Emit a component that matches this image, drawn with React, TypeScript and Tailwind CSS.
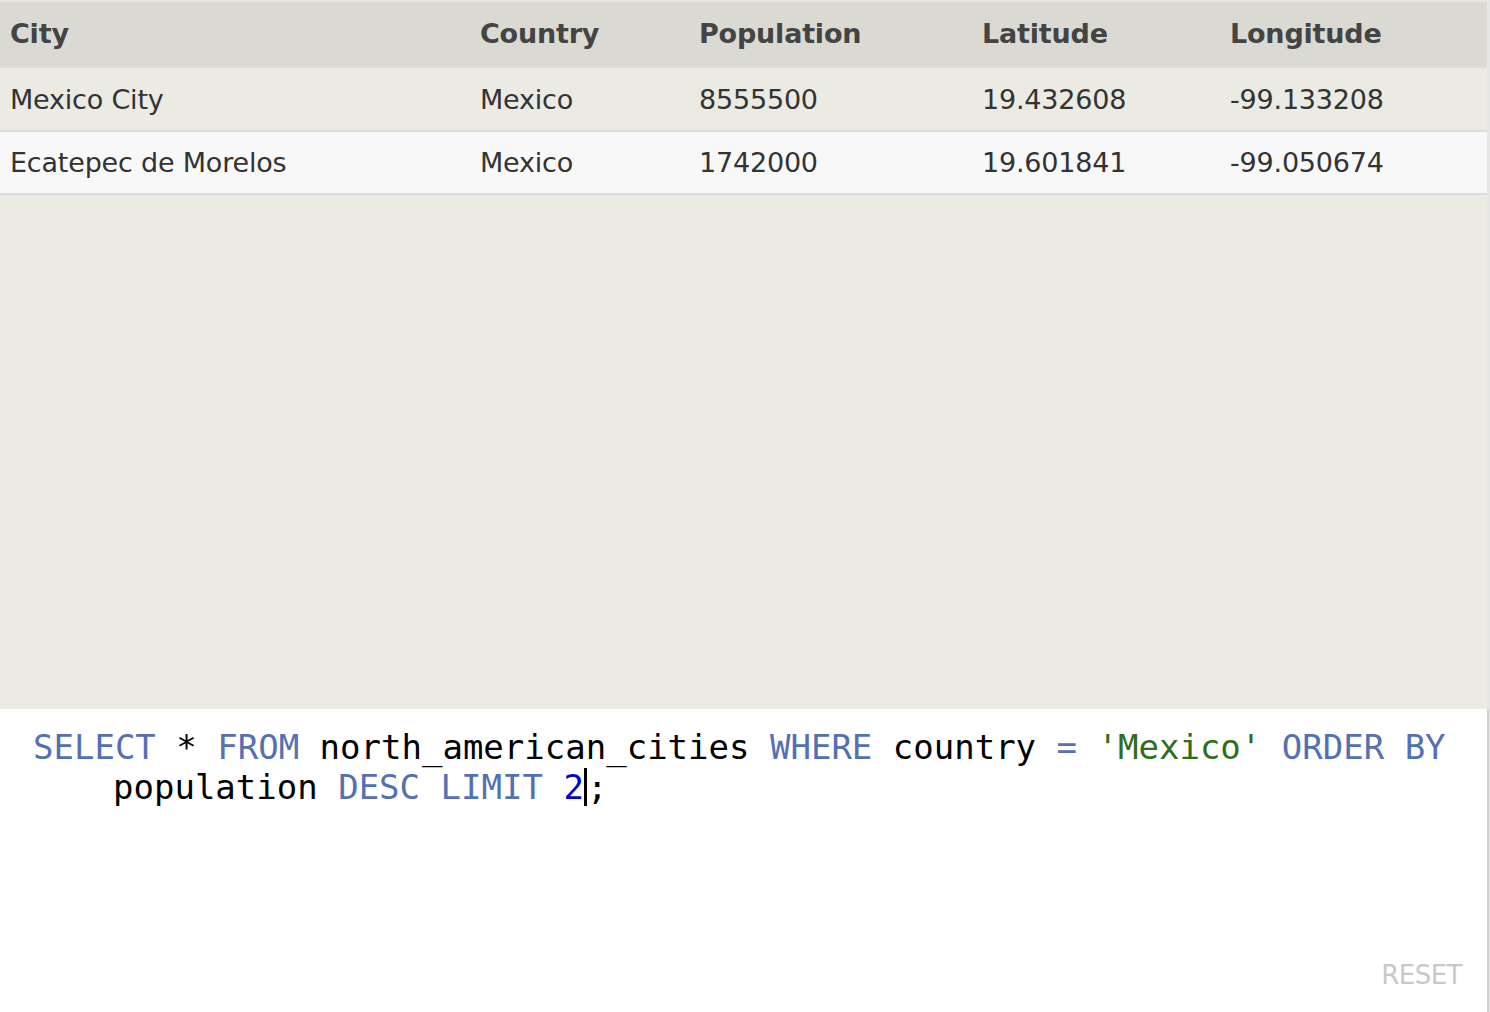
import React from "react";

const rows = [
  ["Mexico City", "Mexico", "8555500", "19.432608", "-99.133208"],
  ["Ecatepec de Morelos", "Mexico", "1742000", "19.601841", "-99.050674"],
];

const cols = ["w-[470px]", "w-[219px]", "w-[283px]", "w-[248px]", "flex-1"];
const heads = ["City", "Country", "Population", "Latitude", "Longitude"];

export default function App() {
  const font = { fontFamily: '"DejaVu Sans", sans-serif' };
  return (
    <div className="w-[1490px] h-[1012px] flex flex-col bg-[#e6e6e6] overflow-hidden" style={font}>
      <div className="h-[707px] flex flex-col bg-[#ebeae3] mt-[2px] mr-[3px]">
        <div className="flex h-[64px] items-center bg-[#dadad2] text-[#444] font-bold text-[27px] pl-[10px] tracking-[-0.2px]">
          {heads.map((h, i) => (
            <div key={h} className={cols[i]}>{h}</div>
          ))}
        </div>
        {rows.map((r, ri) => (
          <div
            key={ri}
            className={
              "flex h-[64px] items-center text-[27px] text-[#333] pl-[10px] pt-[2px] border-t-2 border-[#dcdcd8] tracking-[-0.2px] " +
              (ri === 0 ? "bg-[#ebeae3]" : "bg-[#f8f8f8] h-[65px] border-b-2")
            }
          >
            {r.map((c, i) => (
              <div key={i} className={cols[i]}>{c}</div>
            ))}
          </div>
        ))}
      </div>
      <div className="flex-1 bg-white mr-[1px] border-r-2 border-[#d0d0d0] relative">
        <div
          className="pt-[18px] pl-[33px] text-[34px] leading-[40px] text-black whitespace-pre"
          style={{ fontFamily: '"DejaVu Sans Mono", monospace' }}
        >
          <div>
            <span className="text-[#5470b3]">SELECT</span> * <span className="text-[#5470b3]">FROM</span> north_american_cities{" "}
            <span className="text-[#5470b3]">WHERE</span> country <span className="text-[#5470b3]">=</span>{" "}
            <span className="text-[#2d6e1c]">'Mexico'</span> <span className="text-[#5470b3]">ORDER</span>{" "}
            <span className="text-[#5470b3]">BY</span>
          </div>
          <div className="pl-[80px]">
            population <span className="text-[#5470b3]">DESC</span> <span className="text-[#5470b3]">LIMIT</span>{" "}
            <span className="text-[#0000cc]">2</span>
            <span className="inline-block w-[3px] h-[38px] bg-black align-[-7px]"></span>;
          </div>
        </div>
        <div className="absolute right-[25px] bottom-[17px] text-[26px] text-[#c8c8c8] tracking-[-0.5px]" style={font}>
          RESET
        </div>
      </div>
    </div>
  );
}
